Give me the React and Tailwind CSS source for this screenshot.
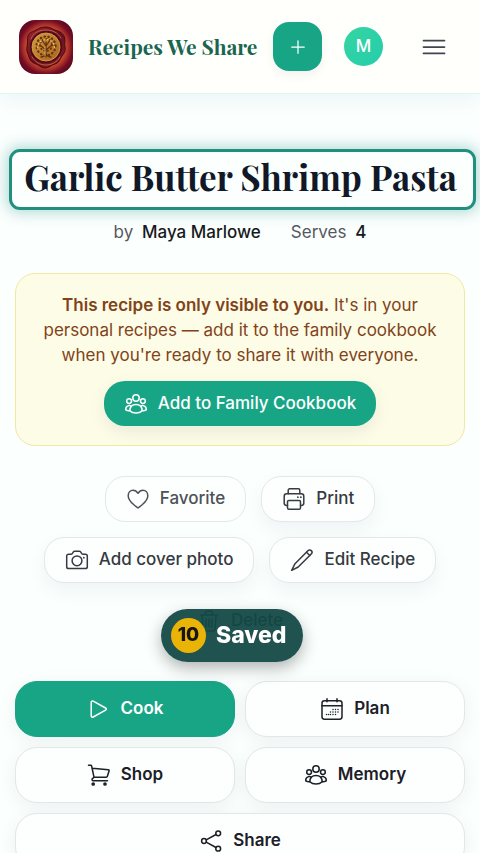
import clsx from 'clsx';

const Icon = ({ children, className = 'size-6', strokeWidth = 1.5 }) => (
  <svg
    viewBox="0 0 24 24"
    fill="none"
    stroke="currentColor"
    strokeWidth={strokeWidth}
    strokeLinecap="round"
    strokeLinejoin="round"
    aria-hidden="true"
    className={clsx('shrink-0', className)}
  >
    {children}
  </svg>
);

const PeopleIcon = () => (
  <Icon>
    <circle cx="12" cy="6" r="3.2" />
    <circle cx="5.1" cy="9.1" r="2.4" />
    <circle cx="18.9" cy="9.1" r="2.4" />
    <path d="M5.800 18.700c.2-3.800 2.700-6.200 6.200-6.200s6 2.400 6.200 6.200c-1.600 1.600-3.700 2.300-6.200 2.300s-4.600-.7-6.200-2.300Z" />
    <path d="M7.300 14.400c-1-.8-2.300-1-3.400-.5-1.500.6-2.300 2.200-2.200 4 1.200.7 2.600 1 4.100.8" />
    <path d="M16.700 14.400c1-.8 2.300-1 3.400-.5 1.500.6 2.300 2.200 2.200 4-1.200.7-2.600 1-4.100.8" />
  </Icon>
);

const HeartIcon = () => (
  <Icon>
    <path d="M12 21c-.8-.8-2.700-2-4.400-3.500C4.600 14.900 2.200 12 2.200 8.700c0-3 2.100-5.400 4.900-5.400 2.200 0 3.700 1.100 4.900 3 1.200-1.900 2.700-3 4.900-3 2.800 0 4.900 2.400 4.900 5.400 0 3.300-2.400 6.200-5.400 8.800C14.700 19 12.800 20.200 12 21Z" />
  </Icon>
);

const PrinterIcon = () => (
  <Icon>
    <path d="M6.200 6.800V3.200c0-.8.6-1.400 1.400-1.400h8.800c.8 0 1.400.6 1.400 1.400v3.600" />
    <path d="M5.500 18.500H4.600a2.400 2.400 0 0 1-2.400-2.400V9.200a2.400 2.400 0 0 1 2.400-2.400h14.800a2.400 2.400 0 0 1 2.400 2.400v6.900a2.400 2.400 0 0 1-2.400 2.400h-.9" />
    <rect x="5.500" y="13.400" width="13" height="8.800" rx="1.400" />
    <path d="M15.800 10.200h.1M18.800 10.200h.1" strokeWidth="1.700" />
  </Icon>
);

const CameraIcon = () => (
  <Icon>
    <path d="M3.600 6.300h2.200c.7 0 1.200-.3 1.600-.9l1-1.500c.3-.4.700-.6 1.200-.6h4.800c.5 0 .9.2 1.200.6l1 1.500c.4.600.9.900 1.600.9h2.200c1.100 0 1.900.8 1.900 1.900v10.500c0 1.100-.8 1.900-1.900 1.900H3.600c-1.100 0-1.900-.8-1.900-1.900V8.200c0-1.100.8-1.900 1.900-1.900Z" />
    <circle cx="12" cy="12.800" r="4.900" />
    <path d="M18.800 9.700h.1" strokeWidth="1.700" />
  </Icon>
);

const PencilIcon = () => (
  <Icon>
    <path d="M17.900 2.700c1-1 2.500-1 3.400-.1s.9 2.400-.1 3.400L8.200 19 1.700 22.300 5 15.700 17.900 2.700Z" />
    <path d="m16.500 4.200 3.300 3.300" />
  </Icon>
);

const TrashIcon = () => (
  <Icon>
    <path d="M3.500 6h17M5 6l1 14.500c.1.900.7 1.500 1.600 1.500h8.800c.9 0 1.500-.6 1.600-1.500L19 6M8.500 6V3.500c0-.8.5-1.300 1.300-1.300h4.400c.8 0 1.300.5 1.300 1.300V6M9 10v8M12 10v8M15 10v8" />
  </Icon>
);

const PlayIcon = () => (
  <Icon>
    <path d="M4.200 5.300c0-1.100 1.100-1.700 2-1.200l12.400 6.900c.9.500.9 1.600 0 2.100L6.200 20c-.9.500-2-.1-2-1.200V5.300Z" />
  </Icon>
);

const CalendarIcon = () => (
  <Icon>
    <rect x="2" y="3.800" width="20" height="18.400" rx="2.400" />
    <path d="M2 8.800h20M7 1.800v3M17 1.800v3" />
    <path
      d="M13 12.500h.01M15.500 12.500h.01M18 12.500h.01M10.500 15h.01M13 15h.01M15.500 15h.01M18 15h.01M6.500 17.500h.01M8.500 17.500h.01M10.500 17.500h.01M13 17.500h.01M15.500 17.500h.01"
      strokeWidth="1.500"
    />
  </Icon>
);

const CartIcon = () => (
  <Icon>
    <path d="M1.500 2.300h2.200c.5 0 .8.300.9.700L7 14.200M5.300 5.200l16 1.500c.6.100.9.500.8 1.100l-1.700 5.500c-.2.600-.6.900-1.200.9H7l-1.500 1.400c-1 .9-.4 2.100.8 2.100h14.200" />
    <circle cx="6.200" cy="21" r="1.100" fill="currentColor" />
    <circle cx="18" cy="21" r="1.100" fill="currentColor" />
  </Icon>
);

const ShareIcon = () => (
  <Icon>
    <circle cx="5" cy="12" r="2.400" />
    <circle cx="19.200" cy="4.300" r="2.400" />
    <circle cx="19.200" cy="19.700" r="2.400" />
    <path d="m7.200 10.800 9.800-5.300M7.200 13.200l9.800 5.300" />
  </Icon>
);

// Wax seal with an embossed tree
const Logo = () => (
  <svg viewBox="0 0 54 54" className="size-[54px] shrink-0" role="img" aria-label="Recipes We Share logo">
    <defs>
      <radialGradient id="glow" cx="50%" cy="50%" r="66%">
        <stop offset="0.45" stopColor="#d9592f" />
        <stop offset="0.6" stopColor="#b63a2b" />
        <stop offset="0.75" stopColor="#750d24" />
        <stop offset="1" stopColor="#45021a" />
      </radialGradient>
      <linearGradient id="wax" x1="0" y1="0" x2="1" y2="1">
        <stop offset="0" stopColor="#9c2a30" />
        <stop offset="0.5" stopColor="#64101f" />
        <stop offset="1" stopColor="#842226" />
      </linearGradient>
      <linearGradient id="coin" x1="0" y1="0" x2="1" y2="1">
        <stop offset="0" stopColor="#d39a3c" />
        <stop offset="1" stopColor="#a7641f" />
      </linearGradient>
    </defs>
    <rect width="54" height="54" rx="16" fill="url(#glow)" />
    <path
      d="M27 7c4 0 6 2 9 3s7 2 9 6 0 7 1 11-1 6-3 9-3 7-7 8-6 4-10 4-6-3-9-4-6-3-7-7-3-6-2-10 0-7 1-11 5-4 8-6 6-3 10-3Z"
      fill="url(#wax)"
      stroke="#4c0716"
      strokeWidth="1"
    />
    <path d="M12 19c2-6 8-9 15-9s12 3 15 8" fill="none" stroke="#c65a4c" strokeWidth="1" strokeLinecap="round" />
    <path d="M13 37c3 5 8 8 14 8s11-3 14-8" fill="none" stroke="#d0603a" strokeWidth="1" strokeLinecap="round" />
    <circle cx="27" cy="27" r="16" fill="#4e0a18" />
    <circle cx="27" cy="27" r="14" fill="url(#coin)" stroke="#e0a448" strokeWidth="0.800" />
    <g fill="none" stroke="#643211" strokeLinecap="round">
      <path d="M27 37V22M27 30l-6-5M27 30l6-5M27 26l-4-6M27 26l4-6M22 37c3 0 4-1 5-3 1 2 2 3 5 3" strokeWidth="1.300" />
      <circle cx="27" cy="26" r="9.500" strokeWidth="2.200" strokeDasharray="0.500 3.400" />
      <circle cx="27" cy="25" r="6" strokeWidth="1.800" strokeDasharray="0.500 3" />
    </g>
    <g fill="none" stroke="#f0c36a" strokeWidth="1.200" strokeLinecap="round">
      <path d="M26 36v-9" strokeWidth="0.800" />
      <path d="M18.500 28a8.500 8.500 0 1 1 17 0" strokeDasharray="0.800 2.800" />
    </g>
  </svg>
);

const ActionButton = ({ icon, children, className }) => (
  <button
    type="button"
    className={clsx(
      'flex h-[46px] items-center gap-2.5 rounded-[20px] border px-5 text-[17px] font-medium',
      className
    )}
  >
    {icon}
    {children}
  </button>
);

const raised = 'border-[#e3e8e8] bg-[#fcfffe] text-[#363a41] shadow-[0_8px_20px_rgba(15,23,42,0.05)]';

const TileButton = ({ icon, children, className = 'border-[#e2e7e7] bg-[#fcfffe] text-[#1c2027]' }) => (
  <button
    type="button"
    className={clsx(
      'flex h-14 items-center justify-center gap-2.5 rounded-[22px] border text-[17px] font-semibold shadow-[0_4px_20px_rgba(15,23,42,0.06)]',
      className
    )}
  >
    {icon}
    {children}
  </button>
);

const Header = () => (
  <header className="flex h-[94px] items-center border-b border-[#e3f6f3] bg-[#fffffc] pr-8 pl-[19px] shadow-[0_4px_20px_rgba(20,120,110,0.08)]">
    <Logo />
    <a
      href="#home"
      className="ml-[15px] font-['Playfair_Display','Liberation_Serif',serif] text-[21px] font-bold whitespace-nowrap text-[#196650]"
    >
      Recipes We Share
    </a>
    <div className="ml-auto flex items-center">
      <button
        type="button"
        aria-label="Add recipe"
        className="flex size-[49px] items-center justify-center rounded-[16px] bg-[#18a586] text-white shadow-[0_4px_12px_rgba(15,23,42,0.06)]"
      >
        <Icon className="size-5" strokeWidth={1.5}>
          <path d="M12 4.500v15M4.500 12h15" />
        </Icon>
      </button>
      <button
        type="button"
        aria-label="Account"
        className="ml-[22px] size-[39px] rounded-full bg-linear-to-br from-[#35d5a2] to-[#25cdab] text-[17px] font-medium text-white"
      >
        M
      </button>
      <button type="button" aria-label="Menu" className="ml-[37px] text-[#41454f]">
        <Icon className="size-7">
          <path d="M3 6.500h18M3 12h18M3 17.500h18" />
        </Icon>
      </button>
    </div>
  </header>
);

const App = () => {
  return (
    <div className="h-screen overflow-hidden bg-[#fbfffe] font-['Inter',sans-serif]">
      <Header />

      <main className="px-[15px] pt-[55px]">
        <h1 className="-mr-[11px] -ml-1.5 flex h-[61px] items-center justify-center rounded-[11px] border-[3px] border-[#218f80] bg-[#fbfffe] pr-1 pb-1 font-['Playfair_Display','Liberation_Serif',serif] text-[35px] font-bold whitespace-nowrap text-[#111827] shadow-[0_0_14px_3px_rgba(33,143,128,0.32)]">
          Garlic Butter Shrimp Pasta
        </h1>

        <div className="mt-2.5 flex justify-center gap-[30px] text-[17px] leading-6 text-[#55595f]">
          <p>
            by <span className="ml-1 font-medium text-[#17191d]">Maya Marlowe</span>
          </p>
          <p>
            Serves <span className="ml-1 font-medium text-[#17191d]">4</span>
          </p>
        </div>

        {/* Visibility notice */}
        <section className="mt-[29px] flex flex-col items-center rounded-[20px] border border-[#f2e99d] bg-[#fcfce7] px-5 py-[19px] text-center">
          <p className="text-[17px] leading-[25px] text-[#814319]">
            <strong className="font-semibold">This recipe is only visible to you.</strong> It's in your personal
            recipes — add it to the family cookbook when you're ready to share it with everyone.
          </p>
          <button
            type="button"
            className="mt-[13px] flex h-[45px] items-center gap-2.5 rounded-[21px] bg-[#18a586] px-5 text-[17px] font-medium text-white shadow-[0_6px_18px_rgba(15,23,42,0.07)]"
          >
            <PeopleIcon />
            Add to Family Cookbook
          </button>
        </section>

        {/* Recipe actions */}
        <div className="mt-[30px] flex flex-wrap justify-center gap-[15px]">
          <ActionButton icon={<HeartIcon />} className="border-[#e3e8e8] bg-[#fcfffe] text-[#4d5158]">
            Favorite
          </ActionButton>
          <ActionButton icon={<PrinterIcon />} className={raised}>
            Print
          </ActionButton>
          <ActionButton icon={<CameraIcon />} className={raised}>
            Add cover photo
          </ActionButton>
          <ActionButton icon={<PencilIcon />} className={raised}>
            Edit Recipe
          </ActionButton>
          <ActionButton icon={<TrashIcon />} className="border-transparent text-[#4d5158]">
            Delete
          </ActionButton>
        </div>

        <div className="mt-[37px] grid grid-cols-2 gap-2.5">
          <TileButton icon={<PlayIcon />} className="border-[#18a586] bg-[#18a586] text-white">
            Cook
          </TileButton>
          <TileButton icon={<CalendarIcon />}>Plan</TileButton>
          <TileButton icon={<CartIcon />}>Shop</TileButton>
          <TileButton icon={<PeopleIcon />}>Memory</TileButton>
          <TileButton icon={<ShareIcon />} className="col-span-2 border-[#e2e7e7] bg-[#fcfffe] text-[#1c2027]">
            Share
          </TileButton>
        </div>
      </main>

      {/* Toast */}
      <div
        role="status"
        className="fixed bottom-[191px] left-[161px] flex h-[53px] items-center gap-2.5 rounded-full bg-[#0f4643]/93 pr-4 pl-2.5 text-white shadow-[0_6px_16px_rgba(0,0,0,0.3)]"
      >
        <span className="flex size-[35px] items-center justify-center rounded-full bg-[#eab308] text-[19px] font-extrabold text-[#171717]">
          10
        </span>
        <span className="text-[23px] font-extrabold">Saved</span>
      </div>
    </div>
  );
};

export default App;
